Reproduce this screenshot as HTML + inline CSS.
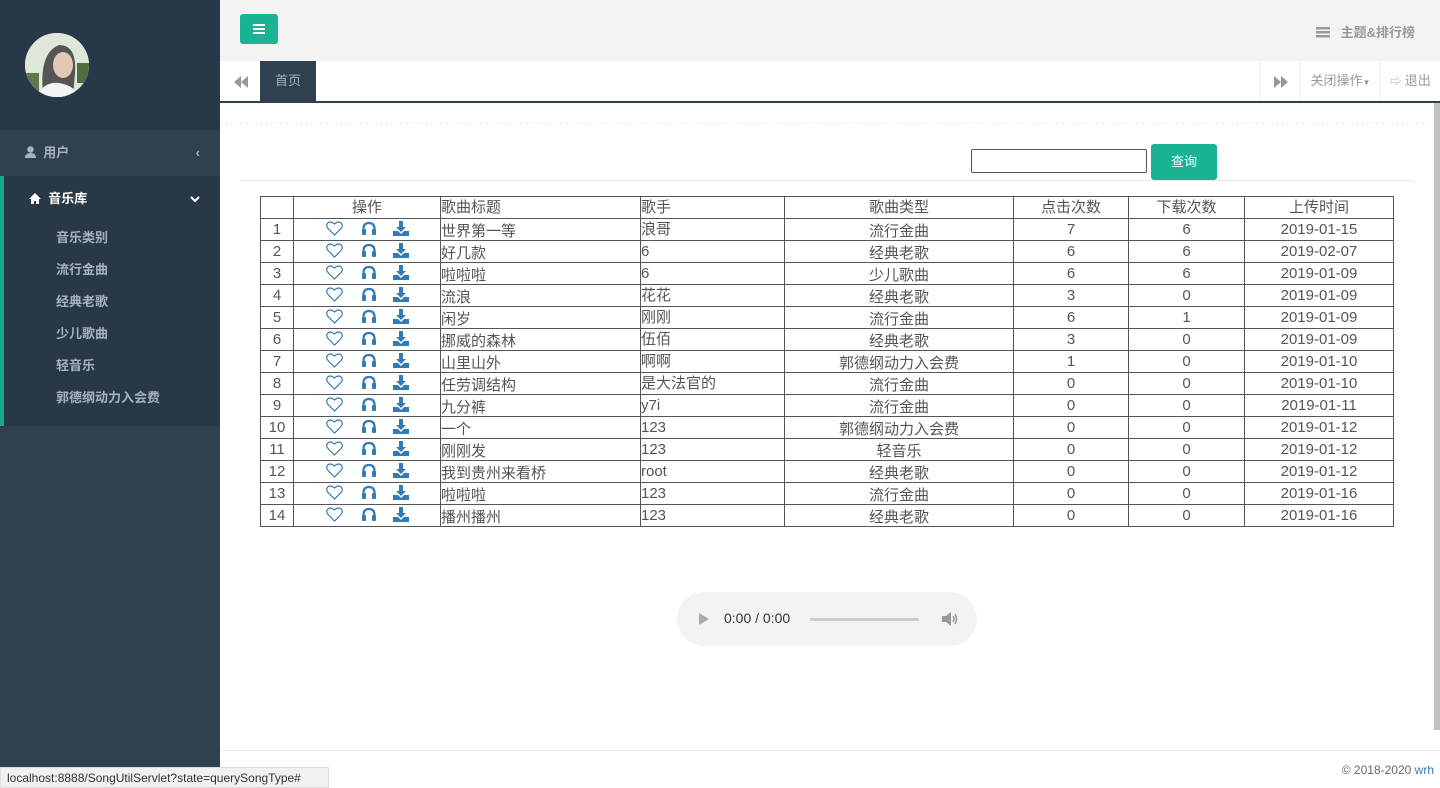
<!DOCTYPE html>
<html><head><meta charset="utf-8"><style>
*{margin:0;padding:0;box-sizing:border-box}
body{width:1440px;height:788px;overflow:hidden;font-family:"Liberation Sans","Noto Sans CJK SC",sans-serif;background:#fff;position:relative}
.side{position:absolute;left:0;top:0;width:220px;height:788px;background:#2f4050}
.prof{height:130px;background:#283849}
.av{position:absolute;left:25px;top:33px;width:64px;height:64px;border-radius:50%;overflow:hidden;background:#e8ece8}
.mi{height:46px;line-height:46px;color:#a7b1c2;font-size:13px;font-weight:bold;padding-left:25px;position:relative}
.sub{background:#293846;border-left:4px solid #19aa8d;padding-bottom:12px}
.sub .mi{color:#fff;padding-left:25px}
.sub a{display:block;color:#a7b1c2;font-size:13px;font-weight:bold;padding-left:52px;height:32px;line-height:32px}
.top{position:absolute;left:220px;top:0;right:0;height:61px;background:#f3f3f4}
.btn{position:absolute;left:20px;top:14px;width:38px;height:30px;background:#1ab394;border-radius:3px}
.tabs{position:absolute;left:220px;top:61px;right:0;height:42px;background:#fff;border-bottom:2px solid #2f4050;font-size:13px;color:#999}
.main{position:absolute;left:220px;top:103px;width:1214px;height:647px;background:#fff}
table{position:absolute;left:40px;top:93px;border-collapse:collapse;font-size:15px;color:#555}
td{border:1px solid #555;height:22px;padding:0;line-height:20px;text-align:center}
td.l{text-align:left}
td span.d{position:relative;top:2px}
td.op{position:relative}
td.op svg{position:absolute;top:2px}
.foot{position:absolute;left:220px;top:750px;right:0;height:38px;border-top:1px solid #e7eaec;background:#fff;font-size:12px;color:#676a6c;text-align:right;padding:12px 6px 0 0}
</style></head><body>
<div class="side">
<div class="prof"></div><div class="av"><svg width="64" height="64"><rect width="64" height="64" fill="#dfe6dc"/><path d="M18 60 Q14 20 34 12 Q52 12 50 40 L48 64 Z" fill="#555"/><ellipse cx="38" cy="32" rx="10" ry="13" fill="#e3c9b5"/><path d="M10 64 Q20 48 34 50 Q48 52 56 64Z" fill="#f4f4f4"/><rect x="0" y="40" width="14" height="24" fill="#5a7a4a"/><rect x="52" y="30" width="12" height="20" fill="#4f6e40"/></svg></div>
<div class="mi"><svg width="11" height="12" style="vertical-align:-1px"><circle cx="5.5" cy="3.5" r="3.2" fill="#a7b1c2"/><path d="M0 12 Q0 7 5.5 7 Q11 7 11 12Z" fill="#a7b1c2"/></svg>&nbsp;&nbsp;用户<span style="position:absolute;right:20px">‹</span></div>
<div class="sub"><div class="mi"><svg width="12" height="11" style="vertical-align:-1px"><path d="M6 0 L12 6 H10 V11 H7 V8 H5 V11 H2 V6 H0Z" fill="#fff"/></svg>&nbsp;&nbsp;音乐库<svg width="10" height="8" style="position:absolute;right:20px;top:20px"><path d="M1 1 L5 5 L9 1" stroke="#fff" stroke-width="2" fill="none"/></svg></div>
<a>音乐类别</a><a>流行金曲</a><a>经典老歌</a><a>少儿歌曲</a><a>轻音乐</a><a>郭德纲动力入会费</a></div>
</div>
<div class="top"><div class="btn"><div style="position:absolute;left:13px;top:10px;width:12px;height:2px;background:#fff;box-shadow:0 4px #fff,0 8px #fff"></div></div>
<div style="position:absolute;right:25px;top:22px;font-size:13px;font-weight:bold;color:#999"><svg width="14" height="11" style="vertical-align:-1px"><rect y="0" width="14" height="2.5" fill="#999"/><rect y="4" width="14" height="2.5" fill="#999"/><rect y="8" width="14" height="2.5" fill="#999"/></svg>&nbsp;&nbsp;&nbsp;主题&amp;排行榜</div></div>
<div class="tabs">
<svg width="14" height="12" style="position:absolute;left:14px;top:15px"><path d="M7 0 L0 6 L7 12Z M14 0 L7 6 L14 12Z" fill="#999"/></svg>
<div style="position:absolute;left:40px;top:0;width:56px;height:40px;background:#2f4050;color:#a7b1c2;text-align:center;line-height:40px">首页</div>
<div style="position:absolute;right:140px;top:0;width:40px;height:40px;border-left:1px solid #eee"><svg width="14" height="12" style="position:absolute;left:13px;top:15px"><path d="M0 0 L7 6 L0 12Z M7 0 L14 6 L7 12Z" fill="#999"/></svg></div>
<div style="position:absolute;right:60px;top:0;width:80px;height:40px;border-left:1px solid #eee;text-align:center;line-height:40px">关闭操作<span style="font-size:8px">▼</span></div>
<div style="position:absolute;right:0;top:0;width:60px;height:40px;border-left:1px solid #eee;text-align:center;line-height:40px"><span style="font-size:11px">⇨</span> 退出</div>
</div>
<div style="position:absolute;left:1434px;top:103px;width:6px;height:627px;background:#c1c1c1"></div>
<div class="main">
<div style="position:absolute;left:0;right:0;top:20px;border-top:1px dashed #eee"></div>
<div style="position:absolute;left:751px;top:46px;width:176px;height:24px;border:1px solid #555;border-radius:2px"></div>
<div style="position:absolute;left:931px;top:41px;width:66px;height:36px;background:#1ab394;color:#fff;font-size:13px;text-align:center;line-height:36px;border-radius:3px">查询</div>
<div style="position:absolute;left:20px;right:20px;top:77px;border-top:1px solid #e7eaec"></div>
<table>
<colgroup><col style="width:33px"><col style="width:147px"><col style="width:200px"><col style="width:144px"><col style="width:229px"><col style="width:115px"><col style="width:116px"><col style="width:149px"></colgroup>
<tr><td></td><td>操作</td><td class="l">歌曲标题</td><td class="l">歌手</td><td>歌曲类型</td><td>点击次数</td><td>下载次数</td><td>上传时间</td></tr>
<tbody id="b"></tbody>
</table>
<div style="position:absolute;left:457px;top:489px;width:300px;height:54px;border-radius:27px;background:#f1f3f4;font-size:14px;color:#333">
<svg width="10" height="12" style="position:absolute;left:22px;top:21px"><path d="M0 0 L10 6 L0 12Z" fill="#aaa"/></svg>
<span style="position:absolute;left:47px;top:18px">0:00 / 0:00</span>
<div style="position:absolute;left:133px;top:26px;width:109px;height:3px;background:#ccc;border-radius:2px"></div>
<svg width="16" height="14" style="position:absolute;left:265px;top:20px"><path d="M0 4 H4 L9 0 V14 L4 10 H0Z" fill="#999"/><path d="M11 4 Q13 7 11 10 M13 2 Q16 7 13 12" stroke="#999" stroke-width="1.5" fill="none"/></svg></div>
</div>
<div class="foot">© 2018-2020 <span style="color:#337ab7">wrh</span></div>
<div style="position:absolute;left:0;top:767px;height:21px;width:329px;padding:3px 6px;background:#f1f1f1;border:1px solid #ddd;font-size:12px;color:#333">localhost:8888/SongUtilServlet?state=querySongType#</div>
<script>
var ic='<svg width="17" height="15" style="left:32px" viewBox="0 0 17 15"><path d="M8.5 14 L2 7.5 Q-0.5 4.5 1.8 2 Q4.5 -0.5 8.5 3 Q12.5 -0.5 15.2 2 Q17.5 4.5 15 7.5Z" fill="none" stroke="#337ab7" stroke-width="1.2"/></svg>'+
'<svg width="16" height="15" style="left:67px" viewBox="0 0 16 15"><path d="M2.5 11 V8 Q2.5 2 8 2 Q13.5 2 13.5 8 V11" fill="none" stroke="#337ab7" stroke-width="2.2"/><rect x="1" y="8" width="4" height="6" rx="1" fill="#337ab7"/><rect x="11" y="8" width="4" height="6" rx="1" fill="#337ab7"/></svg>'+
'<svg width="16" height="15" style="left:99px" viewBox="0 0 16 15"><path d="M6 0 H10 V6 H13 L8 11 L3 6 H6Z" fill="#337ab7"/><path d="M0 10 H5 L8 13 L11 10 H16 V15 H0Z" fill="#337ab7"/></svg>';
var d=[["世界第一等","浪哥","流行金曲",7,6,"2019-01-15"],["好几款","6","经典老歌",6,6,"2019-02-07"],["啦啦啦","6","少儿歌曲",6,6,"2019-01-09"],["流浪","花花","经典老歌",3,0,"2019-01-09"],["闲岁","刚刚","流行金曲",6,1,"2019-01-09"],["挪威的森林","伍佰","经典老歌",3,0,"2019-01-09"],["山里山外","啊啊","郭德纲动力入会费",1,0,"2019-01-10"],["任劳调结构","是大法官的","流行金曲",0,0,"2019-01-10"],["九分裤","y7i","流行金曲",0,0,"2019-01-11"],["一个","123","郭德纲动力入会费",0,0,"2019-01-12"],["刚刚发","123","轻音乐",0,0,"2019-01-12"],["我到贵州来看桥","root","经典老歌",0,0,"2019-01-12"],["啦啦啦","123","流行金曲",0,0,"2019-01-16"],["播州播州","123","经典老歌",0,0,"2019-01-16"]];
var h='';
d.forEach(function(r,i){h+='<tr><td>'+(i+1)+'</td><td class="op">'+ic+'</td><td class="l"><span class="d">'+r[0]+'</span></td><td class="l">'+r[1]+'</td><td><span class="d">'+r[2]+'</span></td><td>'+r[3]+'</td><td>'+r[4]+'</td><td>'+r[5]+'</td></tr>'});
document.getElementById('b').innerHTML=h;
</script>
</body></html>
